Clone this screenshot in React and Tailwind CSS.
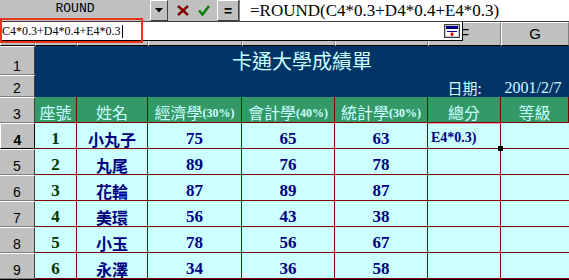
import React from "react";

const students = [
  [1, "小丸子", 75, 65, 63],
  [2, "丸尾", 89, 76, 78],
  [3, "花輪", 87, 89, 87],
  [4, "美環", 56, 43, 38],
  [5, "小玉", 78, 56, 67],
  [6, "永澤", 34, 36, 58],
];

// A-E sit under the edit dropdown, only F and G show
const colLetters = ["", "", "", "", "", "F", "G"];

const RowHead = ({ n, active }) => (
  <div
    className={
      active
        ? "flex items-end justify-center pb-[1px] bg-[#c0c0c0] border-t border-l border-white border-r border-b border-r-black border-b-black font-['Liberation_Sans',sans-serif] text-[14px] leading-none font-bold text-black"
        : "flex items-end justify-center pb-[1px] bg-[#c0c0c0] border-t border-white border-r border-b border-r-[#404040] border-b-[#808080] font-['Liberation_Sans',sans-serif] text-[14px] leading-none text-black"
    }
  >
    {n}
  </div>
);

const HeadCell = ({ title, pct }) => (
  <div className="flex items-end justify-center pb-[2px] bg-[#339966] border-r border-b border-[#800000] text-[#ccffff] leading-none">
    <span className="font-['Noto_Sans_CJK_TC',sans-serif] text-[16px]">{title}</span>
    {pct && (
      <span className="font-['Liberation_Serif',serif] font-bold text-[12px] mb-[1px]">{pct}</span>
    )}
  </div>
);

const Num = ({ v }) => (
  <div className="flex items-end justify-center pb-[1px] bg-[#ccffff] border-r border-b border-[#800000] font-['Liberation_Serif',serif] font-bold text-[17px] leading-none text-[#000080]">
    {v}
  </div>
);

export default function App() {
  return (
    <div className="w-[569px] h-[280px] overflow-hidden bg-[#c0c0c0]">
      {/* formula toolbar */}
      <div className="flex h-[22px] bg-[#c0c0c0] border-b border-[#404040]">
        <div className="w-[150px] flex items-center justify-center pb-[3px] font-['Liberation_Mono',monospace] text-[13px] text-black">
          ROUND
        </div>
        <div className="w-[18px] flex items-center justify-center border-t border-l border-white border-r border-b border-r-[#404040] border-b-[#404040]">
          <svg width="8" height="5" viewBox="0 0 8 5">
            <polygon points="0,0 8,0 4,4.5" fill="#000" />
          </svg>
        </div>
        <div className="w-[49px] flex items-center gap-[9px] pl-[9px] pb-[1px]">
          <svg width="12" height="11" viewBox="0 0 12 11">
            <path d="M1 1 L11 10 M11 1 L1 10" stroke="#800000" strokeWidth="2.4" fill="none" />
          </svg>
          <svg width="12" height="11" viewBox="0 0 12 11">
            <path d="M1 5.5 L4.5 9.5 L11 1" stroke="#008000" strokeWidth="2.4" fill="none" />
          </svg>
        </div>
        <div className="w-[22px] flex items-center justify-center border-t border-l border-white border-r border-b border-r-[#404040] border-b-[#404040] font-['Liberation_Sans',sans-serif] font-bold text-[14px] leading-none text-black">
          =
        </div>
        <div className="flex-1 flex items-center pl-[10px] bg-white border-l border-[#808080] font-['Liberation_Serif',serif] text-[17px] leading-none text-black">
          =ROUND(C4*0.3+D4*0.4+E4*0.3)
        </div>
      </div>

      <div className="relative">
        <div className="grid grid-cols-[35px_42px_71px_94px_93px_93px_73px_68px] grid-rows-[24px_29px_22px_26px_26px_26px_26px_26px_26px_26px] border-b border-black">
          {/* column headers */}
          <div className="bg-[#c0c0c0] border-t border-l border-white border-r border-b border-r-[#808080] border-b-black" />
          {colLetters.map((c, i) => (
            <div
              key={i}
              className="flex items-center justify-center bg-[#c0c0c0] border-t border-l border-white border-r border-b border-r-[#808080] border-b-black font-['Liberation_Sans',sans-serif] text-[15px] text-black"
            >
              {c}
            </div>
          ))}

          {/* row 1: title */}
          <RowHead n={1} />
          <div className="col-span-7 flex items-center justify-center bg-[#003366] font-['Noto_Sans_CJK_TC',sans-serif] text-[20px] leading-none text-[#ccffff]">
            卡通大學成績單
          </div>

          {/* row 2: date */}
          <RowHead n={2} />
          <div className="col-span-5 bg-[#003366]" />
          <div className="flex items-center justify-center pt-[3px] bg-[#003366] font-['Noto_Sans_CJK_TC',sans-serif] text-[15px] leading-none text-[#ccffff]">
            日期:
          </div>
          <div className="flex items-center justify-center pt-[3px] pr-[4px] bg-[#003366] font-['Liberation_Serif',serif] text-[16px] leading-none text-[#ccffff]">
            2001/2/7
          </div>

          {/* row 3: headings */}
          <RowHead n={3} />
          <HeadCell title="座號" />
          <HeadCell title="姓名" />
          <HeadCell title="經濟學" pct="(30%)" />
          <HeadCell title="會計學" pct="(40%)" />
          <HeadCell title="統計學" pct="(30%)" />
          <HeadCell title="總分" />
          <HeadCell title="等級" />

          {/* data rows */}
          {students.map(([id, name, c, d, e], i) => (
            <React.Fragment key={id}>
              <RowHead n={i + 4} active={i === 0} />
              <div className="flex items-end justify-center pb-[1px] bg-[#ccffff] border-r border-b border-[#800000] font-['Liberation_Serif',serif] font-bold text-[17px] leading-none text-[#003300]">
                {id}
              </div>
              <div className="flex items-end justify-center pb-[1px] bg-[#ccffff] border-r border-b border-[#800000] font-['Noto_Sans_CJK_TC',sans-serif] font-bold text-[16px] leading-none text-[#000080]">
                {name}
              </div>
              <Num v={c} />
              <Num v={d} />
              <Num v={e} />
              {i === 0 ? (
                <div className="relative flex items-end pl-[3px] pb-[3px] bg-[#ccffff] border-t border-t-[#ff99cc] border-r border-b border-[#800000] font-['Liberation_Serif',serif] font-bold text-[14px] leading-none text-[#000080]">
                  E4*0.3)
                  <div className="absolute -right-[3px] -bottom-[3px] w-[5px] h-[5px] bg-black" />
                </div>
              ) : (
                <div className="bg-[#ccffff] border-r border-b border-[#800000]" />
              )}
              <div className="bg-[#ccffff] border-b border-[#800000]" />
            </React.Fragment>
          ))}
        </div>

        {/* in-cell edit dropdown over the column headers */}
        <div className="absolute left-0 top-0 w-[463px] h-[19px] flex items-center justify-between pl-[2px] pr-[2px] bg-white border-r border-b border-black font-['Liberation_Serif',serif] text-[12px] leading-none text-black">
          <span className="flex items-center">
            C4*0.3+D4*0.4+E4*0.3
            <span className="ml-[1px] w-[1px] h-[13px] bg-black" />
          </span>
          <svg width="16" height="14" viewBox="0 0 16 14">
            <rect x="0.5" y="0.5" width="15" height="13" fill="#c0c0c0" stroke="#404040" />
            <rect x="2" y="2" width="12" height="3" fill="#000080" />
            <rect x="2" y="5" width="12" height="7" fill="#fff" />
            <rect x="3" y="7" width="10" height="1" fill="#000080" />
            <polygon points="8,8 10.5,10.5 5.5,10.5" fill="#ff0000" />
            <rect x="7" y="10" width="2" height="2" fill="#ff0000" />
          </svg>
        </div>

        {/* annotation outline */}
        <div className="absolute left-0 -top-[4px] w-[143px] h-[25px] border-2 border-[#e8361e]" />
      </div>
    </div>
  );
}
